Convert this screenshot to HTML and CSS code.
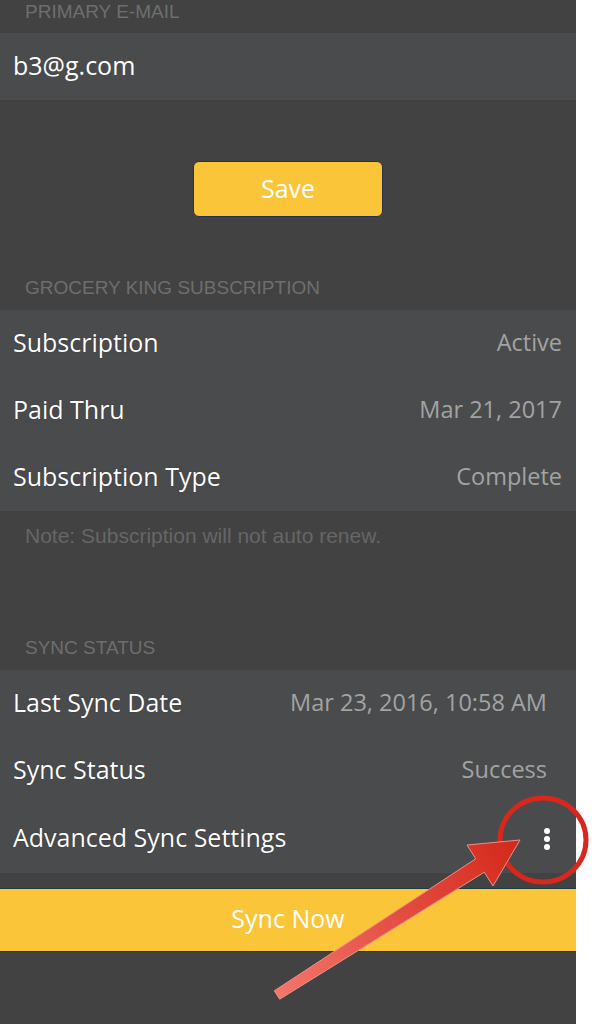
FILE: index.html
```html
<!DOCTYPE html>
<html lang="en">
<head>
  <meta charset="UTF-8">
  <title>Account</title>
  <link rel="stylesheet" href="styles.css">
</head>
<body>

  <div class="screen">
    <div class="section-head top">PRIMARY E-MAIL</div>
    <div class="group">
      <div class="row email">b3@g.com</div>
    </div>

    <div class="save-wrap">
      <button class="save-btn">Save</button>
    </div>

    <div class="section-head">GROCERY KING SUBSCRIPTION</div>
    <div class="group">
      <div class="row">
        <span class="label">Subscription</span>
        <span class="value">Active</span>
      </div>
      <div class="row">
        <span class="label">Paid Thru</span>
        <span class="value">Mar 21, 2017</span>
      </div>
      <div class="row">
        <span class="label">Subscription Type</span>
        <span class="value">Complete</span>
      </div>
    </div>
    <div class="note">Note: Subscription will not auto renew.</div>

    <div class="section-head">SYNC STATUS</div>
    <div class="group sync">
      <div class="row">
        <span class="label">Last Sync Date</span>
        <span class="value">Mar 23, 2016, 10:58 AM</span>
      </div>
      <div class="row">
        <span class="label">Sync Status</span>
        <span class="value">Success</span>
      </div>
      <div class="row">
        <span class="label">Advanced Sync Settings</span>
        <span class="kebab"><i></i><i></i><i></i></span>
      </div>
    </div>

    <div class="sync-bar">Sync Now</div>
  </div>

  <!-- annotation on top of the screenshot -->
  <svg class="markup" width="592" height="1024" viewBox="0 0 592 1024">
    <defs>
      <linearGradient id="arrowFill" x1="277" y1="995" x2="520" y2="840" gradientUnits="userSpaceOnUse">
        <stop offset="0" stop-color="#f4756a"/>
        <stop offset="1" stop-color="#d3281a"/>
      </linearGradient>
    </defs>
    <ellipse cx="543" cy="840" rx="43" ry="42" fill="none" stroke="#d8271c" stroke-width="5"/>
    <polygon points="274.3,990.8 475.7,858.8 467,845 520,840 493,886 484.3,872.2 279.7,999.2"
             fill="url(#arrowFill)" stroke="#e99089" stroke-width="1"/>
  </svg>

</body>
</html>
```

FILE: styles.css
```css
* {
  margin: 0;
  padding: 0;
  box-sizing: border-box;
}

body {
  background: white;
  position: relative;
  width: 592px;
  height: 1024px;
  overflow: hidden;
}

.screen {
  width: 576px;
  height: 1024px;
  background: #424242;
  font-family: 'Open Sans', sans-serif;
  color: white;
}

.section-head {
  padding: 0 25px 12px;
  line-height: 20px;
  font-family: 'Liberation Sans', Arial, sans-serif;
  font-size: 19px;
  color: #6e6e6e;
}

.section-head.top {
  height: 33px;
  padding-top: 2px;
}

.group {
  background: #4a4b4d;
}

.row {
  height: 67px;
  padding: 0 14px 0 13px;
  display: flex;
  align-items: center;
  justify-content: space-between;
  font-size: 25px;
  padding-bottom: 4px;
}

.row .label {
  color: white;
  text-shadow: 0 0 1px rgba(0,0,0,0.6);
}

.row .value {
  color: #a3a3a3;
  font-size: 23.5px;
}

.sync .row {
  padding-right: 29px;
  height: 67.5px;
}

.email {
  justify-content: flex-start;
}

.save-wrap {
  padding: 61px 0;
  display: flex;
  justify-content: center;
}

.save-btn {
  width: 190px;
  height: 56px;
  background: #fbc53a;
  border: 1px solid #253153;
  border-radius: 6px;
  color: white;
  font-family: 'Open Sans', sans-serif;
  font-size: 25px;
  padding-bottom: 3px;
}

.note {
  padding: 15px 25px 92px;
  line-height: 20px;
  font-family: 'Liberation Sans', Arial, sans-serif;
  font-size: 21px;
  color: #666;
}

.kebab {
  display: flex;
  flex-direction: column;
  gap: 2px;
  margin-right: -3px;
  margin-top: 4px;
}

.kebab i {
  width: 6px;
  height: 6px;
  border-radius: 50%;
  background: white;
}

.sync-bar {
  margin-top: 15px;
  height: 64px;
  background: #fbc53a;
  border-top: 1px solid #1f3a3e;
  border-bottom: 1px solid #1f3a3e;
  display: flex;
  align-items: center;
  justify-content: center;
  font-size: 25px;
  color: white;
  padding-bottom: 3px;
}

.markup {
  position: absolute;
  top: 0;
  left: 0;
  pointer-events: none;
}
```
